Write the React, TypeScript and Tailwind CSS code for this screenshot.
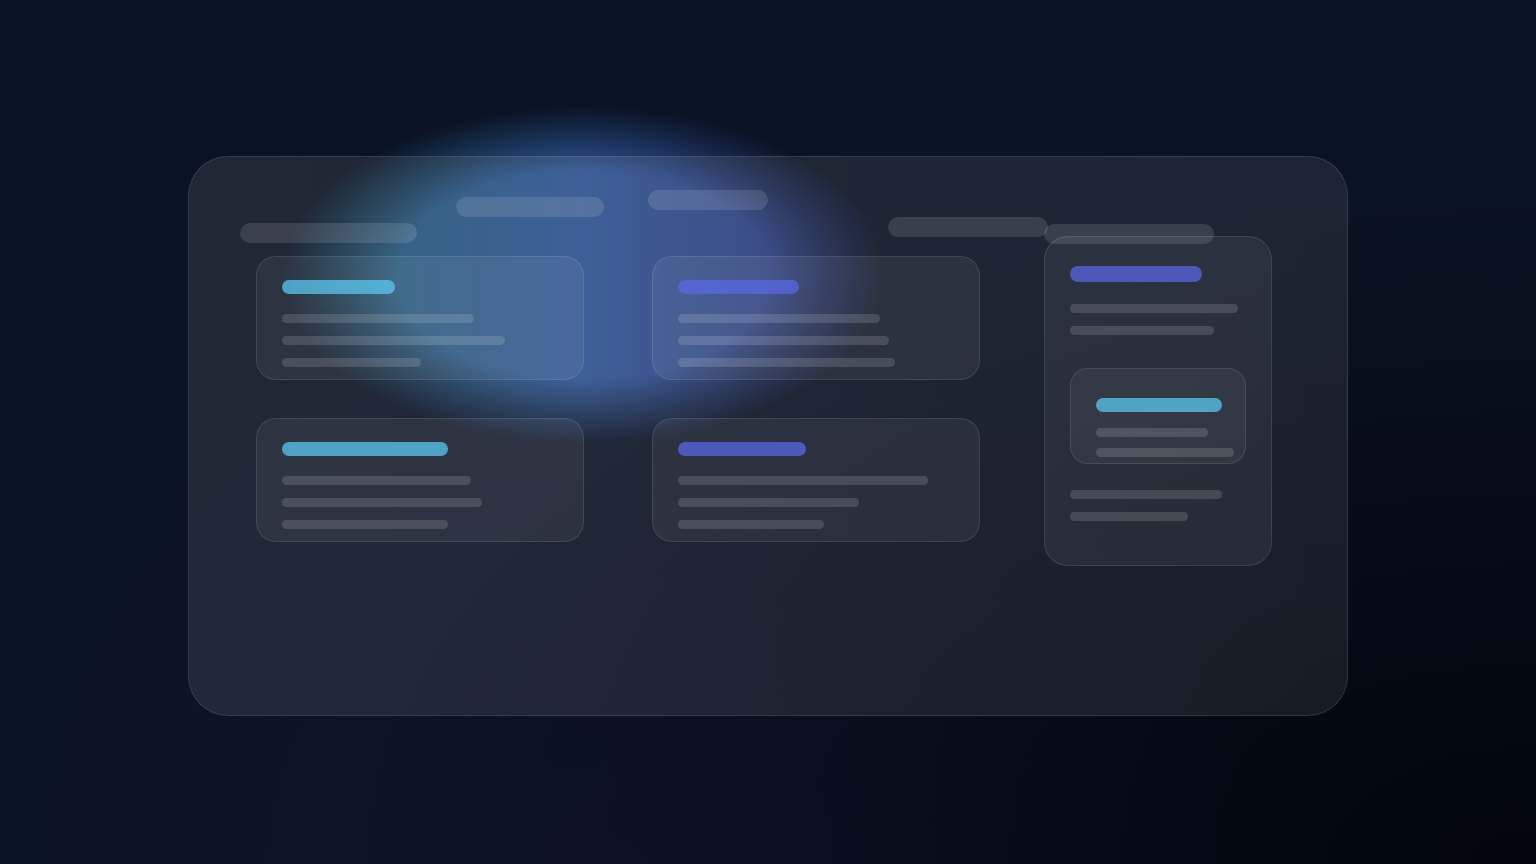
import React from "react";

type Card = { accent: string; accentW: string; lines: string[] };

const CYAN = "bg-[#5ac8f0]/75";
const INDIGO = "bg-[#5867e5]/75";

const col1: Card[] = [
  { accent: CYAN, accentW: "w-[113px]", lines: ["w-[192px]", "w-[223px]", "w-[139px]"] },
  { accent: CYAN, accentW: "w-[166px]", lines: ["w-[189px]", "w-[200px]", "w-[166px]"] },
];
const col2: Card[] = [
  { accent: INDIGO, accentW: "w-[121px]", lines: ["w-[202px]", "w-[211px]", "w-[217px]"] },
  { accent: INDIGO, accentW: "w-[128px]", lines: ["w-[250px]", "w-[181px]", "w-[146px]"] },
];

function Line({ w }: { w: string }) {
  return <div className={`h-[9px] rounded-full bg-white/[0.14] ${w}`} />;
}

function SmallCard({ card }: { card: Card }) {
  return (
    <div className="h-[124px] w-[328px] rounded-[20px] border border-white/10 bg-white/[0.06] px-[25px] pt-[23px]">
      <div className={`h-[14px] rounded-full ${card.accent} ${card.accentW}`} />
      <div className="mt-[20px] flex flex-col gap-[13px]">
        {card.lines.map((w, i) => (
          <Line key={i} w={w} />
        ))}
      </div>
    </div>
  );
}

export default function App() {
  return (
    <div className="relative min-h-screen w-full overflow-hidden bg-[#0a1323] pt-[156px]">
      {/* background shading */}
      <div className="pointer-events-none absolute inset-0 bg-[radial-gradient(ellipse_at_100%_100%,#02050c_0%,rgba(2,5,12,0.6)_25%,transparent_55%)]" />
      <div className="pointer-events-none absolute inset-0 bg-[radial-gradient(ellipse_at_40%_100%,rgba(20,20,50,0.35)_0%,transparent_50%)]" />
      {/* glow */}
      <div className="pointer-events-none absolute left-[282px] top-[106px] h-[338px] w-[604px] bg-linear-to-r from-[#1f566a] via-[#2c508e] to-[#27306e] [mask-image:radial-gradient(closest-side,#000_62%,transparent_100%)]" />

      {/* main panel */}
      <div className="relative mx-auto h-[560px] w-[1160px] rounded-[40px] border border-white/10 bg-linear-to-r from-white/[0.09] to-white/[0.08]">
        {/* header pills */}
        <div className="flex items-start pl-[51px] pt-[33px]">
          <div className="mt-[33px] h-5 w-[177px] rounded-full bg-white/[0.12]" />
          <div className="ml-[39px] mt-[7px] h-5 w-[148px] rounded-full bg-white/[0.12]" />
          <div className="ml-[44px] h-5 w-[120px] rounded-full bg-white/[0.12]" />
          <div className="ml-[120px] mt-[27px] h-5 w-[160px] rounded-full bg-white/[0.12]" />
          <div className="ml-[-4px] mt-[34px] h-5 w-[170px] rounded-full bg-white/[0.12]" />
        </div>

        {/* grid */}
        <div className="mt-[-8px] flex items-start pl-[67px]">
          <div className="mt-[20px] flex flex-col gap-[38px]">
            {col1.map((c, i) => (
              <SmallCard key={i} card={c} />
            ))}
          </div>
          <div className="ml-[68px] mt-[20px] flex flex-col gap-[38px]">
            {col2.map((c, i) => (
              <SmallCard key={i} card={c} />
            ))}
          </div>
          <div className="ml-[64px] h-[330px] w-[228px] rounded-[24px] border border-white/10 bg-white/[0.06] px-[25px] pt-[29px]">
            <div className={`h-[16px] w-[132px] rounded-full ${INDIGO}`} />
            <div className="mt-[22px] flex flex-col gap-[13px]">
              <Line w="w-[168px]" />
              <Line w="w-[144px]" />
            </div>
            <div className="mt-[33px] h-[96px] w-[176px] rounded-[18px] border border-white/10 bg-white/[0.05] pl-[25px] pt-[29px]">
              <div className={`h-[14px] w-[126px] rounded-full ${CYAN}`} />
              <div className="mt-[16px] flex flex-col gap-[11px]">
                <Line w="w-[112px]" />
                <Line w="w-[138px]" />
              </div>
            </div>
            <div className="mt-[26px] flex flex-col gap-[13px]">
              <Line w="w-[152px]" />
              <Line w="w-[118px]" />
            </div>
          </div>
        </div>
      </div>
    </div>
  );
}
